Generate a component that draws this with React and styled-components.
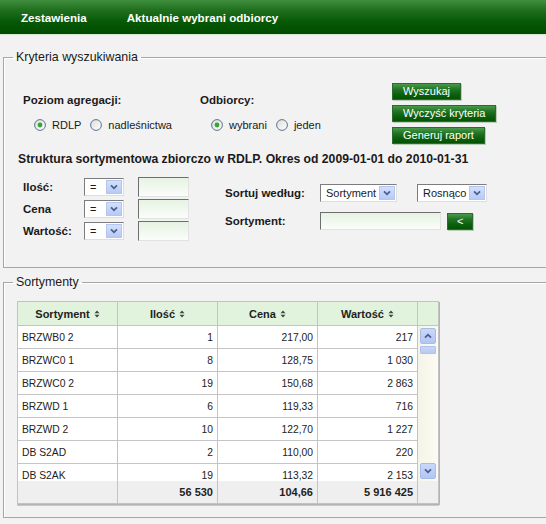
import React from 'react';
import styled, { createGlobalStyle } from 'styled-components';

const Global = createGlobalStyle`
  html, body { margin: 0; padding: 0; background: #f2f2f2; overflow: hidden; }
  body { font-family: "Liberation Sans", Arial, sans-serif; font-size: 11px; color: #1a1a1a; }
  * { box-sizing: border-box; }
`;

const Page = styled.div`
  width: 546px;
  height: 524px;
  overflow: hidden;
`;

const TopBar = styled.div`
  height: 35px;
  display: flex;
  align-items: center;
  gap: 40px;
  padding-left: 21px;
  background: linear-gradient(to bottom, #3f8f3f 0%, #1f6f1f 30%, #065806 65%, #004b00 100%);
  border-bottom: 1px solid #d3ead3;
  box-shadow: 0 1px 0 #f6e9f1, 0 2px 0 #f7eef3;
`;

const NavItem = styled.span`
  color: #fff;
  font-weight: bold;
  font-size: 11.6px;
`;

const Fieldset = styled.fieldset`
  margin: ${p => p.$top}px -20px 0 3px;
  padding: 0 0 ${p => p.$bottom}px 9px;
  border: 1px solid #a6a6a6;
  box-shadow: inset 1px 1px 0 #fff;
  min-width: 0;
`;

const Legend = styled.legend`
  padding: 0 3px;
  font-size: 12.4px;
  line-height: 14px;
  color: #1a1a1a;
`;

const TopRow = styled.div`
  display: flex;
  padding-left: 10px;
  margin-top: 19px;
`;

const Group = styled.div`
  width: ${p => p.$w}px;
  padding-top: 10px;
`;

const GroupLabel = styled.div`
  font-weight: bold;
  font-size: 11.5px;
  line-height: 14px;
`;

const RadioRow = styled.div`
  display: flex;
  align-items: center;
  margin-top: 11px;
  padding-left: 11px;
  height: 14px;
`;

const RadioItem = styled.label`
  display: flex;
  align-items: center;
  gap: 6px;
  margin-right: 9px;
  font-size: 11px;
`;

const ButtonCol = styled.div`
  display: flex;
  flex-direction: column;
  align-items: flex-start;
  gap: 5px;
`;

const GreenButton = styled.button`
  height: 17px;
  padding: 0 ${p => p.$pad ?? 10}px;
  font-family: "Liberation Sans", Arial, sans-serif;
  font-size: 11px;
  line-height: 15px;
  color: #fff;
  background: linear-gradient(to bottom, #4a9a4a 0%, #22742a 35%, #0b600b 70%, #055205 100%);
  border: 1px solid #2b6b2b;
  box-shadow: 1px 1px 0 #b9cdb9;
  border-radius: 0;
  cursor: pointer;
`;

const Heading = styled.div`
  margin: 8px 0 0 5px;
  font-weight: bold;
  font-size: 12.2px;
  line-height: 14px;
  white-space: nowrap;
`;

const Criteria = styled.div`
  display: flex;
  padding-left: 10px;
  margin-top: 11px;
`;

const LeftCol = styled.div`
  width: 202px;
  display: flex;
  flex-direction: column;
  gap: 2px;
`;

const CritRow = styled.div`
  display: flex;
  align-items: center;
  height: 20px;
`;

const RowLabel = styled.div`
  width: ${p => p.$w}px;
  font-weight: bold;
  font-size: 11.5px;
`;

const RightCol = styled.div`
  display: flex;
  flex-direction: column;
  gap: 10px;
  padding-top: 7px;
`;

const RightRow = styled.div`
  display: flex;
  align-items: center;
  height: 18px;
  gap: ${p => p.$gap ?? 0}px;
`;

const SelectBox = styled.div`
  width: ${p => p.$w}px;
  height: ${p => p.$h ?? 18}px;
  margin-right: ${p => p.$mr ?? 0}px;
  display: flex;
  align-items: center;
  justify-content: space-between;
  padding: 0 1px 0 5px;
  background: #fff;
  border-top: 1px solid #7c7c7c;
  border-left: 1px solid #7c7c7c;
  border-right: 1px solid #dedede;
  border-bottom: 1px solid #dedede;
  font-size: 11px;
`;

const ArrowBtn = styled.span`
  width: 16px;
  height: ${p => p.$h ?? 14}px;
  display: flex;
  align-items: center;
  justify-content: center;
  background: linear-gradient(to bottom, #d3dffc, #b7caf6);
  border: 1px solid #b5c6ec;
`;

const TextInput = styled.input`
  width: ${p => p.$w}px;
  height: ${p => p.$h ?? 20}px;
  margin: 0;
  padding: 0 3px;
  border-top: 1px solid #6e6e6e;
  border-left: 1px solid #6e6e6e;
  border-right: 1px solid #e2e2e2;
  border-bottom: 1px solid #e2e2e2;
  background: linear-gradient(to bottom, #e6f3e2, #fbfdfa);
  outline: none;
`;

const TableWrap = styled.div`
  margin: 12px 0 0 4px;
  width: 422px;
  border: 1px solid #c2c2c2;
  box-shadow: 1px 1px 0 #b4b4b4, 0 2px 0 #c8c8c8;
  background: #fff;
`;

const Grid = styled.div`
  display: grid;
  grid-template-columns: 100px 100px 100px 100px 20px;
`;

const HeadCell = styled.div`
  height: 24px;
  display: flex;
  align-items: center;
  justify-content: center;
  gap: 4px;
  background: #e1f3dc;
  border-right: ${p => (p.$last ? 'none' : '1px solid #c4c4c4')};
  border-bottom: 1px solid #c4c4c4;
  font-weight: bold;
  font-size: 11px;
  color: #222;
`;

const BodyWrap = styled.div`
  display: flex;
  height: 155px;
`;

const Rows = styled.div`
  width: 400px;
  height: 155px;
  overflow: hidden;
`;

const Row = styled.div`
  display: grid;
  grid-template-columns: 100px 100px 100px 100px;
  height: 23px;
`;

const Cell = styled.div`
  display: flex;
  align-items: center;
  justify-content: ${p => (p.$right ? 'flex-end' : 'flex-start')};
  padding: 0 4px;
  border-right: 1px solid #c4c4c4;
  border-bottom: 1px solid #c4c4c4;
  font-size: 10.3px;
  color: #222;
`;

const ScrollCol = styled.div`
  width: 20px;
  display: flex;
  flex-direction: column;
  justify-content: space-between;
  padding: 2px 0 2px 2px;
  background: linear-gradient(to right, #f4f4e6, #fbfbf3);
`;

const ScrollTop = styled.div`
  display: flex;
  flex-direction: column;
  gap: 2px;
`;

const ScrollBtn = styled.div`
  width: 16px;
  height: 16px;
  display: flex;
  align-items: center;
  justify-content: center;
  background: linear-gradient(to bottom, #c9d8fb, #b2c6f4);
  border: 1px solid #a9bce6;
  border-radius: 2px;
`;

const Thumb = styled.div`
  width: 16px;
  height: 8px;
  background: linear-gradient(to bottom, #c6d5fa, #b8caf4);
  border: 1px solid #b0c2ea;
  border-radius: 1px;
`;

const FootCell = styled.div`
  height: 22px;
  display: flex;
  align-items: center;
  justify-content: flex-end;
  padding: 0 4px;
  background: #efefef;
  border-right: ${p => (p.$last ? 'none' : '1px solid #c4c4c4')};
  font-weight: bold;
  font-size: 11px;
  color: #222;
`;

const Radio = ({ checked }) => (
  <svg width="12" height="12" viewBox="0 0 12 12">
    <defs>
      <linearGradient id="rg" x1="0" y1="0" x2="1" y2="1">
        <stop offset="0" stopColor="#dcdcd6" />
        <stop offset="1" stopColor="#ffffff" />
      </linearGradient>
    </defs>
    <circle cx="6" cy="6" r="5.4" fill="url(#rg)" stroke="#5b7394" strokeWidth="1" />
    {checked && <circle cx="6" cy="6" r="2.4" fill="#34a834" />}
  </svg>
);

const ChevronDown = () => (
  <svg width="8" height="6" viewBox="0 0 8 6">
    <path d="M1 1.3 L4 4.3 L7 1.3" stroke="#4b5f8a" strokeWidth="1.8" fill="none" />
  </svg>
);

const ChevronUp = () => (
  <svg width="8" height="6" viewBox="0 0 8 6">
    <path d="M1 4.7 L4 1.7 L7 4.7" stroke="#4b5f8a" strokeWidth="1.8" fill="none" />
  </svg>
);

const SortIcon = () => (
  <svg width="6" height="8" viewBox="0 0 6 8">
    <path d="M0.5 3.3 L3 0.5 L5.5 3.3Z M0.5 4.7 L3 7.5 L5.5 4.7Z" fill="#444" />
  </svg>
);

const Select = ({ value, w, mr }) => (
  <SelectBox $w={w} $mr={mr}>
    <span>{value}</span>
    <ArrowBtn>
      <ChevronDown />
    </ArrowBtn>
  </SelectBox>
);

const data = [
  ['BRZWB0 2', '1', '217,00', '217'],
  ['BRZWC0 1', '8', '128,75', '1 030'],
  ['BRZWC0 2', '19', '150,68', '2 863'],
  ['BRZWD 1', '6', '119,33', '716'],
  ['BRZWD 2', '10', '122,70', '1 227'],
  ['DB S2AD', '2', '110,00', '220'],
  ['DB S2AK', '19', '113,32', '2 153'],
];

export default function App() {
  return (
    <Page>
      <Global />
      <TopBar>
        <NavItem>Zestawienia</NavItem>
        <NavItem>Aktualnie wybrani odbiorcy</NavItem>
      </TopBar>

      <Fieldset $top={15} $bottom={26}>
        <Legend>Kryteria wyszukiwania</Legend>
        <TopRow>
          <Group $w={177}>
            <GroupLabel>Poziom agregacji:</GroupLabel>
            <RadioRow>
              <RadioItem><Radio checked />RDLP</RadioItem>
              <RadioItem><Radio />nadleśnictwa</RadioItem>
            </RadioRow>
          </Group>
          <Group $w={192}>
            <GroupLabel>Odbiorcy:</GroupLabel>
            <RadioRow>
              <RadioItem><Radio checked />wybrani</RadioItem>
              <RadioItem><Radio />jeden</RadioItem>
            </RadioRow>
          </Group>
          <ButtonCol>
            <GreenButton>Wyszukaj</GreenButton>
            <GreenButton>Wyczyść kryteria</GreenButton>
            <GreenButton>Generuj raport</GreenButton>
          </ButtonCol>
        </TopRow>

        <Heading>Struktura sortymentowa zbiorczo w RDLP. Okres od 2009-01-01 do 2010-01-31</Heading>

        <Criteria>
          <LeftCol>
            {['Ilość:', 'Cena', 'Wartość:'].map(l => (
              <CritRow key={l}>
                <RowLabel $w={61}>{l}</RowLabel>
                <Select value="=" w={40} mr={14} />
                <TextInput $w={51} readOnly value="" />
              </CritRow>
            ))}
          </LeftCol>
          <RightCol>
            <RightRow>
              <RowLabel $w={95}>Sortuj według:</RowLabel>
              <Select value="Sortyment" w={77} mr={20} />
              <Select value="Rosnąco" w={70} />
            </RightRow>
            <RightRow $gap={6}>
              <RowLabel $w={89}>Sortyment:</RowLabel>
              <TextInput $w={121} $h={18} readOnly value="" />
              <GreenButton $pad={9}>&lt;</GreenButton>
            </RightRow>
          </RightCol>
        </Criteria>
      </Fieldset>

      <Fieldset $top={7} $bottom={13}>
        <Legend>Sortymenty</Legend>
        <TableWrap>
          <Grid>
            <HeadCell>Sortyment <SortIcon /></HeadCell>
            <HeadCell>Ilość <SortIcon /></HeadCell>
            <HeadCell>Cena <SortIcon /></HeadCell>
            <HeadCell>Wartość <SortIcon /></HeadCell>
            <HeadCell $last />
          </Grid>
          <BodyWrap>
            <Rows>
              {data.map(r => (
                <Row key={r[0]}>
                  <Cell>{r[0]}</Cell>
                  <Cell $right>{r[1]}</Cell>
                  <Cell $right>{r[2]}</Cell>
                  <Cell $right>{r[3]}</Cell>
                </Row>
              ))}
            </Rows>
            <ScrollCol>
              <ScrollTop>
                <ScrollBtn><ChevronUp /></ScrollBtn>
                <Thumb />
              </ScrollTop>
              <ScrollBtn><ChevronDown /></ScrollBtn>
            </ScrollCol>
          </BodyWrap>
          <Grid>
            <FootCell />
            <FootCell>56 530</FootCell>
            <FootCell>104,66</FootCell>
            <FootCell>5 916 425</FootCell>
            <FootCell $last />
          </Grid>
        </TableWrap>
      </Fieldset>
    </Page>
  );
}
